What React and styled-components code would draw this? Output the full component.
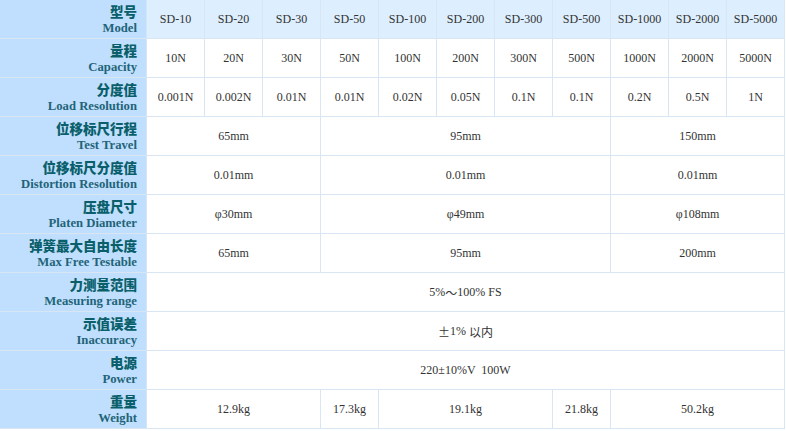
import React from 'react';
import styled, { createGlobalStyle } from 'styled-components';

const GlobalStyle = createGlobalStyle`
    html, body {
        margin: 0;
        padding: 0;
        background: #FFFFFF;
    }
`

const Table = styled.div`
    display: grid;
    grid-template-columns: 146px repeat(11, 57px);
    grid-auto-rows: 38px;
    gap: 1px;
    background: #D8E6F3;
    padding: 0 1px 1px 0;
    width: max-content;
`

const Label = styled.div`
    background: #C0DFFE;
    display: flex;
    flex-direction: column;
    align-items: flex-end;
    justify-content: center;
    padding-right: 9px;
    font-weight: bold;
`

const LabelCn = styled.div`
    font-family: "Noto Sans CJK SC", sans-serif;
    font-size: 13.5px;
    line-height: 17px;
    font-weight: 900;
    color: #0A5F6B;
`

const LabelEn = styled.div`
    font-family: "Liberation Serif", "Times New Roman", serif;
    font-size: 12.7px;
    line-height: 16px;
    font-weight: bold;
    color: #1F6478;
`

const Cell = styled.div`
    grid-column: span ${p => p.span || 1};
    background: ${p => (p.head ? '#DDEEFE' : '#FFFFFF')};
    display: flex;
    align-items: center;
    justify-content: center;
    font-family: "Liberation Serif", "Times New Roman", serif;
    font-size: 12px;
    color: #333333;
    white-space: pre;
`

const Cjk = styled.span`
    font-family: "Noto Sans CJK SC", sans-serif;
    font-size: 12px;
`

const models = ['SD-10', 'SD-20', 'SD-30', 'SD-50', 'SD-100', 'SD-200', 'SD-300', 'SD-500', 'SD-1000', 'SD-2000', 'SD-5000']

const rows = [
    { cn: '量程', en: 'Capacity', cells: ['10N', '20N', '30N', '50N', '100N', '200N', '300N', '500N', '1000N', '2000N', '5000N'].map(t => [t, 1]) },
    { cn: '分度值', en: 'Load Resolution', cells: ['0.001N', '0.002N', '0.01N', '0.01N', '0.02N', '0.05N', '0.1N', '0.1N', '0.2N', '0.5N', '1N'].map(t => [t, 1]) },
    { cn: '位移标尺行程', en: 'Test Travel', cells: [['65mm', 3], ['95mm', 5], ['150mm', 3]] },
    { cn: '位移标尺分度值', en: 'Distortion Resolution', cells: [['0.01mm', 3], ['0.01mm', 5], ['0.01mm', 3]] },
    { cn: '压盘尺寸', en: 'Platen Diameter', cells: [['φ30mm', 3], ['φ49mm', 5], ['φ108mm', 3]] },
    { cn: '弹簧最大自由长度', en: 'Max Free Testable', cells: [['65mm', 3], ['95mm', 5], ['200mm', 3]] },
    { cn: '力测量范围', en: 'Measuring range', cells: [[<>5%<Cjk>～</Cjk>100% FS</>, 11]] },
    { cn: '示值误差', en: 'Inaccuracy', cells: [[<><Cjk>±</Cjk>1%{'\u00a0'}<Cjk>以内</Cjk></>, 11]] },
    { cn: '电源', en: 'Power', cells: [['220±10%V  100W', 11]] },
    { cn: '重量', en: 'Weight', cells: [['12.9kg', 3], ['17.3kg', 1], ['19.1kg', 3], ['21.8kg', 1], ['50.2kg', 3]] },
]

export default function App() {
    return (
        <>
            <GlobalStyle />
            <Table>
                <Label>
                    <LabelCn>型号</LabelCn>
                    <LabelEn>Model</LabelEn>
                </Label>
                {models.map(m => <Cell head key={m}>{m}</Cell>)}
                {rows.map(r => (
                    <React.Fragment key={r.en}>
                        <Label>
                            <LabelCn>{r.cn}</LabelCn>
                            <LabelEn>{r.en}</LabelEn>
                        </Label>
                        {r.cells.map(([t, s], i) => <Cell key={i} span={s}>{t}</Cell>)}
                    </React.Fragment>
                ))}
            </Table>
        </>
    )
}
